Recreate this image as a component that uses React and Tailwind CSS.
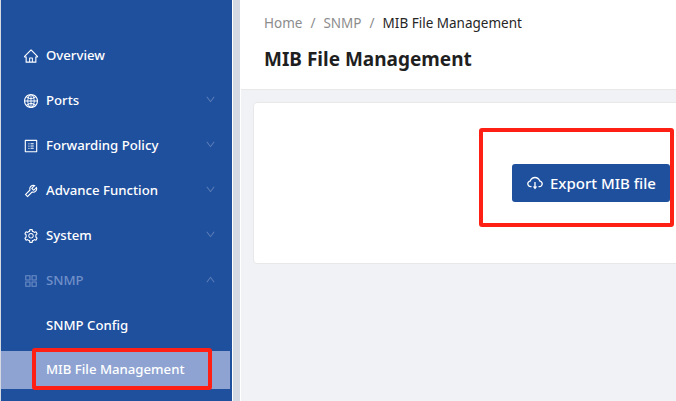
import { AiOutlineHome, AiOutlineGlobal, AiOutlineProfile, AiOutlineTool, AiOutlineSetting, AiOutlineAppstore, AiOutlineCloudDownload, AiOutlineDown, AiOutlineUp } from "react-icons/ai"

const MenuItem = ({ icon: Icon, label, arrow, dim }) => {
  return (
    <div className={`flex items-center h-[45px] pl-[22px] pr-[16px] ${dim ? "text-[#6f8fc8]" : "text-white"}`}>
      <Icon className="w-[16px] h-[16px] mr-[7px] shrink-0" />
      <span className="text-[13.2px] font-medium flex-1">{label}</span>
      {arrow === "down" && <AiOutlineDown className="w-[11px] h-[11px] text-[#5f7fb8] -mt-[3px]" />}
      {arrow === "up" && <AiOutlineUp className="w-[11px] h-[11px] text-[#5f7fb8] -mt-[3px]" />}
    </div>
  )
}

const App = () => {
  return (
    <div className="relative flex w-[676px] h-[401px] overflow-hidden bg-[#f0f2f5] font-['Noto_Sans',sans-serif]">
      <div className="w-[1px] bg-[#d5d9e2]"></div>
      <aside className="w-[231px] h-full bg-[#1f509e] pt-[33px] shrink-0">
        <MenuItem icon={AiOutlineHome} label="Overview" />
        <MenuItem icon={AiOutlineGlobal} label="Ports" arrow="down" />
        <MenuItem icon={AiOutlineProfile} label="Forwarding Policy" arrow="down" />
        <MenuItem icon={AiOutlineTool} label="Advance Function" arrow="down" />
        <MenuItem icon={AiOutlineSetting} label="System" arrow="down" />
        <MenuItem icon={AiOutlineAppstore} label="SNMP" arrow="up" dim />
        <div className="flex items-center h-[45px] pl-[45px] text-white text-[13.2px] font-medium">SNMP Config</div>
        <div className="flex items-center h-[38px] mt-[3px] w-[229px] pl-[45px] bg-[#8ea3d2] text-white text-[13.2px] font-medium">MIB File Management</div>
      </aside>
      <div className="w-[9px] shrink-0 bg-[#d5d9e2] border-x border-white"></div>
      <main className="flex-1 min-w-0">
        <div className="h-[90px] bg-white border-b border-[#e8e8e8] pl-[23px] pt-[13px]">
          <div className="flex items-center text-[13.5px] text-[#8c8c8c] leading-[20px]">
            <span>Home</span>
            <span className="mx-[8px]">/</span>
            <span>SNMP</span>
            <span className="mx-[8px]">/</span>
            <span className="text-[#262626]">MIB File Management</span>
          </div>
          <h1 className="mt-[11px] text-[19px] font-bold text-[#1f1f1f] leading-[30px]">MIB File Management</h1>
        </div>
        <div className="ml-[12px] mt-[12px] w-[445px] h-[162px] bg-white border border-[#e8e8e8] rounded-sm flex items-center justify-end pr-[27px]">
          <button className="flex items-center shrink-0 w-[158px] h-[38px] pl-[14px] bg-[#1f509e] rounded-[3px] text-white text-[15px] font-medium">
            <AiOutlineCloudDownload className="w-[18px] h-[18px] mr-[6px]" />
            Export MIB file
          </button>
        </div>
      </main>
      <div className="absolute left-[32px] top-[348px] w-[180px] h-[42px] border-[4px] border-[#ff2015] rounded-[3px]"></div>
      <div className="absolute left-[479px] top-[128px] w-[195px] h-[99px] border-[4px] border-[#ff2015] rounded-[3px]"></div>
    </div>
  )
}

export default App
